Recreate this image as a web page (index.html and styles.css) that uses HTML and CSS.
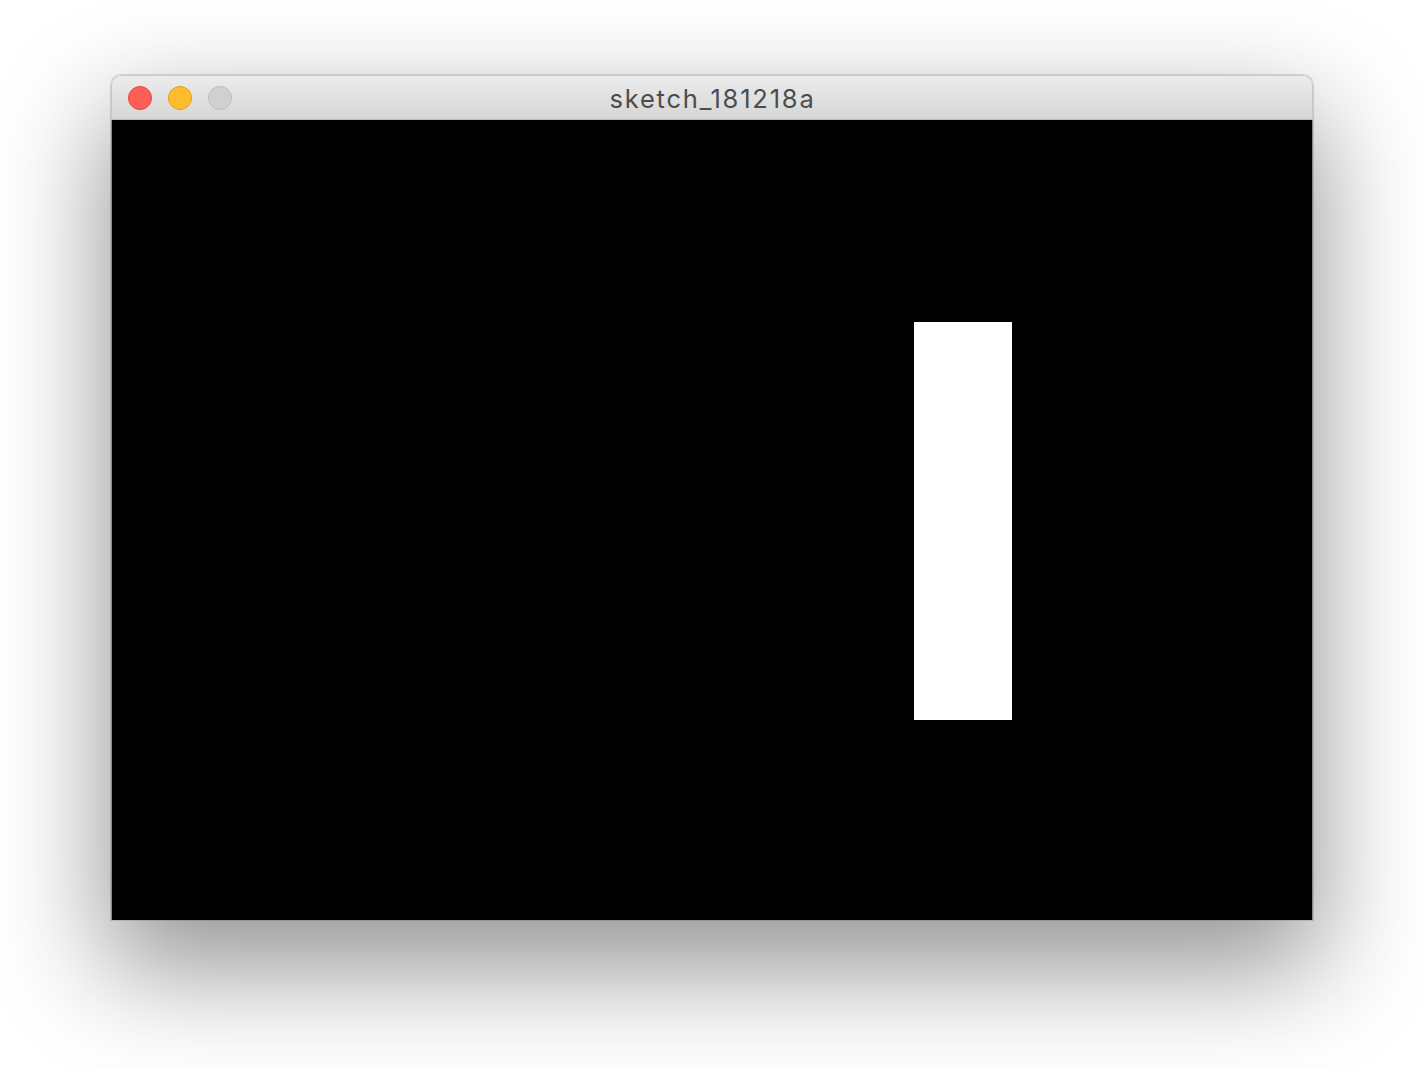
FILE: index.html
```html
<!DOCTYPE html>
<html>
<head>
<meta charset="utf-8">
<link rel="stylesheet" href="styles.css">
</head>
<body>
<div class="window">
  <div class="titlebar">
    <div class="lights">
      <span class="light red"></span>
      <span class="light yellow"></span>
      <span class="light gray"></span>
    </div>
    <div class="title">sketch_181218a</div>
  </div>
  <div class="canvas">
    <div class="rect"></div>
  </div>
</div>
</body>
</html>
```

FILE: styles.css
```css
html, body {
  margin: 0;
  padding: 0;
  background: #ffffff;
}
body {
  width: 1424px;
  height: 1068px;
  overflow: hidden;
  padding-top: 75px;
  padding-left: 111px;
  box-sizing: border-box;
}
.window {
  width: 1202px;
  border-radius: 10px 10px 0 0;
  box-shadow: 0 44px 110px 6px rgba(0,0,0,0.42), 0 0 0 1px rgba(0,0,0,0.12);
  overflow: hidden;
}
.titlebar {
  position: relative;
  height: 43px;
  background: linear-gradient(#ececec, #d6d6d6);
  border: 1px solid #c9c9c9;
  border-bottom: 1px solid #bdbdbd;
  border-radius: 10px 10px 0 0;
  display: flex;
  align-items: center;
  justify-content: center;
}
.lights {
  position: absolute;
  left: 16px;
  top: 10px;
  display: flex;
  gap: 16px;
}
.light {
  width: 22px;
  height: 22px;
  border-radius: 50%;
  display: block;
}
.red { background: #fe5f57; border: 1px solid #e2463f; }
.yellow { background: #febc2e; border: 1px solid #e1a116; }
.gray { background: #d0d0d0; border: 1px solid #bcbcbc; }
.title {
  font-family: "Inter", "Roboto", sans-serif;
  font-size: 25.5px;
  letter-spacing: 1.8px;
  color: #4c4c4c;
  line-height: 1;
  margin-top: 2px;
  margin-left: 1px;
}
.canvas {
  background: #000000;
  border-left: 1px solid #8a8a8a;
  border-right: 1px solid #8a8a8a;
  padding-top: 202px;
  padding-left: 802px;
  width: 398px;
  height: 598px;
}
.rect {
  width: 98px;
  height: 398px;
  background: #ffffff;
}
```
